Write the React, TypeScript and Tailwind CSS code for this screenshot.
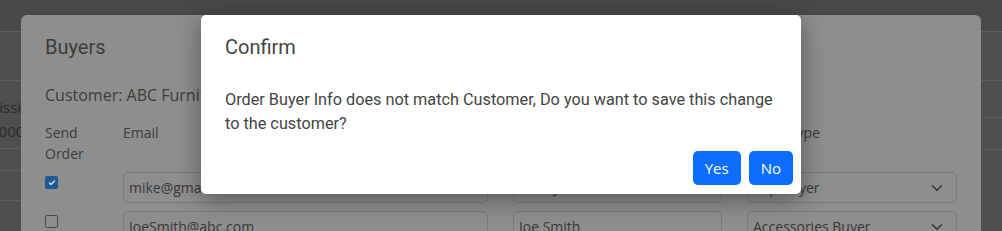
import React from 'react';

const buyers = [
  { checked: true, email: 'mike@gmail.com', name: 'Mike Jones', type: 'Top Buyer' },
  { checked: false, email: 'JoeSmith@abc.com', name: 'Joe Smith', type: 'Accessories Buyer' },
];

const Chevron = () => (
  <svg className="h-[12px] w-[16px] shrink-0" viewBox="0 0 16 16" fill="none">
    <path d="m2 5 6 6 6-6" stroke="#343434" strokeWidth={2} strokeLinecap="round" strokeLinejoin="round" />
  </svg>
);

const Checkbox = ({ checked }: { checked: boolean }) =>
  checked ? (
    <span className="flex h-[13px] w-[13px] items-center justify-center rounded-[2px] bg-[#1e5a94]">
      <svg className="h-[10px] w-[10px]" viewBox="0 0 20 20" fill="none">
        <path d="m5 10 3 3 7-7" stroke="#d8d8d8" strokeWidth={3} strokeLinecap="round" strokeLinejoin="round" />
      </svg>
    </span>
  ) : (
    <span className="block h-[13px] w-[13px] rounded-[2px] border border-[#4a4a4a]" />
  );

export default function App() {
  return (
    <div className="relative h-[231px] w-[1002px] overflow-hidden bg-[#4e4e4e] font-['Open_Sans',sans-serif]">
      {/* page behind the modals */}
      <div className="h-[32px] border-b border-[#5e5e5e] bg-[#494949]" />
      <div className="h-[49px] border-b border-[#5e5e5e]" />
      <div className="flex justify-between">
        <div className="w-[60px] text-[15px] text-[#2b2b2b]">
          <div className="h-[68px] border-b border-[#5e5e5e] pt-[14px] leading-[24px]">
            <div className="-ml-[47px] whitespace-nowrap">Commission</div>
            <div className="-ml-[10px] whitespace-nowrap">100012</div>
          </div>
          <div className="h-[22px] border-b border-[#5e5e5e]" />
          <div className="h-[30px] border-b border-[#5e5e5e]" />
        </div>
        <div className="w-[60px]">
          <div className="h-[37px] border-b border-[#5e5e5e]" />
          <div className="h-[32px] border-b border-[#5e5e5e]" />
        </div>
      </div>

      {/* Buyers modal */}
      <div className="absolute left-[21px] top-[15px] h-[260px] w-[960px] rounded-[6px] bg-[#8e8e8e] px-6 text-[#3c3c3c]">
        <h5 className="pt-[17px] font-['Roboto',sans-serif] text-[20px] leading-[30px]">Buyers</h5>
        <p className="mt-[21px] text-[16px] leading-[24px]">Customer: ABC Furniture</p>
        <div className="mt-[15px] grid grid-cols-[53px_365px_209px_210px] gap-x-[25px] gap-y-2 text-[14px] leading-[21px]">
          <div>Send Order</div>
          <div>Email</div>
          <div>Name</div>
          <div>Buyer Type</div>
          {buyers.map((b) => (
            <React.Fragment key={b.email}>
              <div className="pt-1">
                <Checkbox checked={b.checked} />
              </div>
              <input
                readOnly
                value={b.email}
                className="h-[31px] rounded-[5px] border border-[#7a7a7a] bg-transparent px-[5px] text-[#383838] outline-none"
              />
              <input
                readOnly
                value={b.name}
                className="h-[31px] rounded-[5px] border border-[#7a7a7a] bg-transparent px-[5px] text-[#383838] outline-none"
              />
              <div className="flex h-[31px] items-center justify-between rounded-[5px] border border-[#7a7a7a] pl-[5px] pr-[11px] text-[#383838]">
                <span>{b.type}</span>
                <Chevron />
              </div>
            </React.Fragment>
          ))}
        </div>
      </div>

      {/* Confirm dialog */}
      <div className="absolute left-[201px] top-[15px] w-[600px] rounded-[5px] bg-white font-['Roboto',sans-serif] text-[#444] shadow-[0_5px_25px_rgba(0,0,0,0.4)]">
        <div className="pl-6 pr-5 pt-[17px]">
          <h5 className="text-[20px] leading-[30px]">Confirm</h5>
          <p className="mt-[26px] text-[16.25px] leading-[24px]">
            Order Buyer Info does not match Customer, Do you want to save this change to the customer?
          </p>
        </div>
        <div className="mt-[15px] flex justify-end gap-2 pb-[9px] pr-2 font-['Open_Sans',sans-serif] text-[15px]">
          <button className="h-[34px] rounded-[5px] bg-[#0d6efd] px-3 text-white">Yes</button>
          <button className="h-[34px] rounded-[5px] bg-[#0d6efd] px-3 text-white">No</button>
        </div>
      </div>
    </div>
  );
}
